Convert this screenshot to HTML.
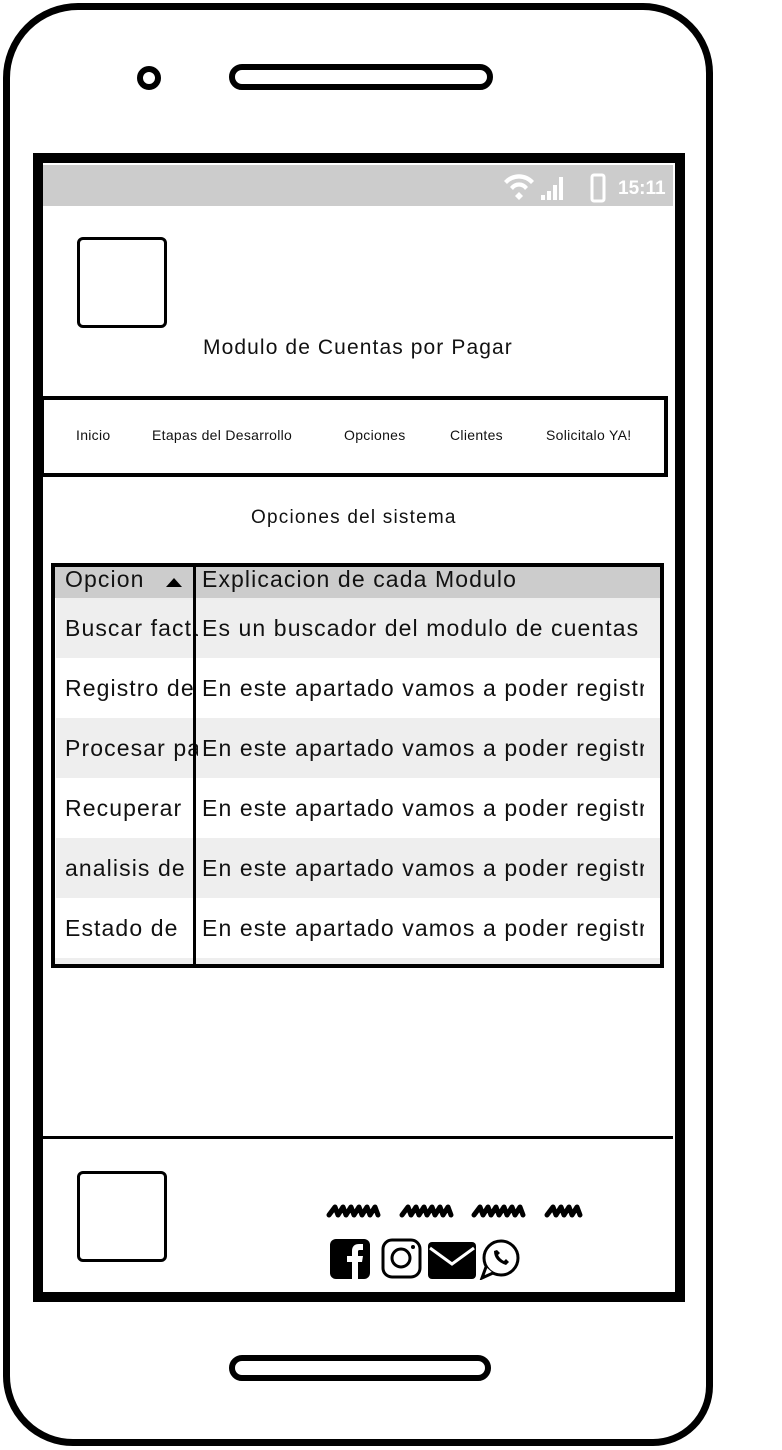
<!DOCTYPE html>
<html><head><style>
*{margin:0;padding:0;box-sizing:border-box}
body{width:782px;height:1450px;background:#fff;position:relative;overflow:hidden;font-family:"Liberation Sans",sans-serif;color:#111}
.a{position:absolute}
.row{position:absolute;left:56px;width:604px;height:60px;font-size:23px;line-height:60px;letter-spacing:1.1px}
.row span{position:absolute;white-space:nowrap;overflow:hidden}
.c1{left:9px;width:133px}.c2{left:146px;width:442px}
.nav{position:absolute;top:427px;font-size:14px;letter-spacing:0.3px}
</style></head><body>
<div class="a" style="left:3px;top:3px;width:710px;height:1443px;border:7px solid #000;border-radius:75px 70px 60px 70px"></div>
<div class="a" style="left:137px;top:66px;width:24px;height:24px;border:6px solid #000;border-radius:50%"></div>
<div class="a" style="left:229px;top:64px;width:264px;height:26px;border:6px solid #000;border-radius:14px"></div>
<div class="a" style="left:229px;top:1355px;width:262px;height:26px;border:6px solid #000;border-radius:14px"></div>
<div class="a" style="left:33px;top:153px;width:652px;height:1149px;border:10px solid #000"></div>
<div class="a" style="left:43px;top:165px;width:630px;height:41px;background:#ccc"></div>
<svg class="a" style="left:502px;top:171px" width="170" height="32" viewBox="0 0 170 32">
<path d="M2 10a20 20 0 0 1 30 0l-3 3a16 16 0 0 0-24 0zM8 16a11 11 0 0 1 18 0l-3 3a7 7 0 0 0-12 0zM17 21l4 4-4 4-4-4z" fill="#fff"/>
<rect x="39" y="24" width="4" height="5" fill="#fff"/><rect x="45" y="20" width="4" height="9" fill="#fff"/><rect x="51" y="14" width="4" height="15" fill="#fff"/><rect x="57" y="6" width="4" height="23" fill="#fff"/>
<rect x="90" y="4" width="12" height="26" rx="2" fill="none" stroke="#fff" stroke-width="3"/>
<text x="116" y="23" font-family="Liberation Sans" font-weight="bold" font-size="19" fill="#fff">15:11</text></svg>
<div class="a" style="left:77px;top:237px;width:90px;height:91px;border:3px solid #000;border-radius:6px"></div>
<div class="a" style="left:203px;top:336px;font-size:21px;letter-spacing:1.1px">Modulo de Cuentas por Pagar</div>
<div class="a" style="left:40px;top:396px;width:628px;height:81px;border:4px solid #000"></div>
<div class="nav" style="left:76px">Inicio</div>
<div class="nav" style="left:152px">Etapas del Desarrollo</div>
<div class="nav" style="left:344px">Opciones</div>
<div class="nav" style="left:450px">Clientes</div>
<div class="nav" style="left:546px">Solicitalo YA!</div>
<div class="a" style="left:251px;top:507px;font-size:19px;letter-spacing:1.2px">Opciones del sistema</div>
<div class="a" style="left:51px;top:563px;width:613px;height:405px;border:4px solid #000;background:#fff"></div>
<div class="a" style="left:55px;top:567px;width:605px;height:31px;background:#ccc"></div>
<div class="a" style="left:65px;top:566px;font-size:23px;letter-spacing:1.1px">Opcion</div>
<div class="a" style="left:166px;top:578px;width:0;height:0;border-left:8px solid transparent;border-right:8px solid transparent;border-bottom:9px solid #000"></div>
<div class="a" style="left:202px;top:566px;font-size:23px;letter-spacing:1.1px">Explicacion de cada Modulo</div>
<div class="row" style="top:598px;background:#eee"><span class="c1">Buscar facturas</span><span class="c2">Es un buscador del modulo de cuentas</span></div>
<div class="row" style="top:658px"><span class="c1">Registro de</span><span class="c2">En este apartado vamos a poder registrar</span></div>
<div class="row" style="top:718px;background:#eee"><span class="c1">Procesar pagos</span><span class="c2">En este apartado vamos a poder registrar</span></div>
<div class="row" style="top:778px"><span class="c1">Recuperar</span><span class="c2">En este apartado vamos a poder registrar</span></div>
<div class="row" style="top:838px;background:#eee"><span class="c1">analisis de</span><span class="c2">En este apartado vamos a poder registrar</span></div>
<div class="row" style="top:898px"><span class="c1">Estado de</span><span class="c2">En este apartado vamos a poder registrar</span></div>
<div class="a" style="left:55px;top:958px;width:605px;height:6px;background:#eee"></div>
<div class="a" style="left:193px;top:565px;width:3px;height:403px;background:#000"></div>
<div class="a" style="left:43px;top:1136px;width:630px;height:3px;background:#000"></div>
<div class="a" style="left:77px;top:1171px;width:90px;height:91px;border:3px solid #000;border-radius:6px"></div>
<svg class="a" style="left:325px;top:1200px" width="265" height="20" viewBox="0 0 265 20"><g fill="none" stroke="#000" stroke-width="5" stroke-linecap="round" stroke-linejoin="round"><path d="M4 15l6-8l3 8l5-8l3 8l5-8l3 8l5-8l3 8l5-8l3 8l5-8l3 8"/><path d="M77 15l6-8l3 8l5-8l3 8l5-8l3 8l5-8l3 8l5-8l3 8l5-8l3 8"/><path d="M149 15l6-8l3 8l5-8l3 8l5-8l3 8l5-8l3 8l5-8l3 8l5-8l3 8"/><path d="M222 15l6-8l3 8l5-8l3 8l5-8l3 8l5-8l3 8"/></g></svg>
<svg class="a" style="left:328px;top:1236px" width="200" height="44" viewBox="0 0 200 44">
<rect x="2" y="3" width="40" height="40" rx="6" fill="#000"/><path d="M24 43V26h-5v-6h5v-5c0-5 3-7 7-7h4v6h-3c-2 0-2 1-2 2v4h5l-1 6h-4v17z" fill="#fff"/>
<rect x="55" y="4" width="37" height="37" rx="9" fill="none" stroke="#000" stroke-width="3"/><circle cx="73" cy="22" r="9" fill="none" stroke="#000" stroke-width="3"/><circle cx="85" cy="11" r="2" fill="#000"/>
<rect x="100" y="6" width="48" height="37" rx="4" fill="#000"/><path d="M102 12l22 16 22-16" fill="none" stroke="#fff" stroke-width="3"/>
<circle cx="173" cy="22" r="17" fill="none" stroke="#000" stroke-width="3"/><path d="M158 31l-4 11 11-5" fill="#fff" stroke="#000" stroke-width="3"/><path d="M166 15q0 10 12 14l3-3-3-3-2 2q-4-2-6-6l2-2-3-3z" fill="#000"/>
</svg>
</body></html>
